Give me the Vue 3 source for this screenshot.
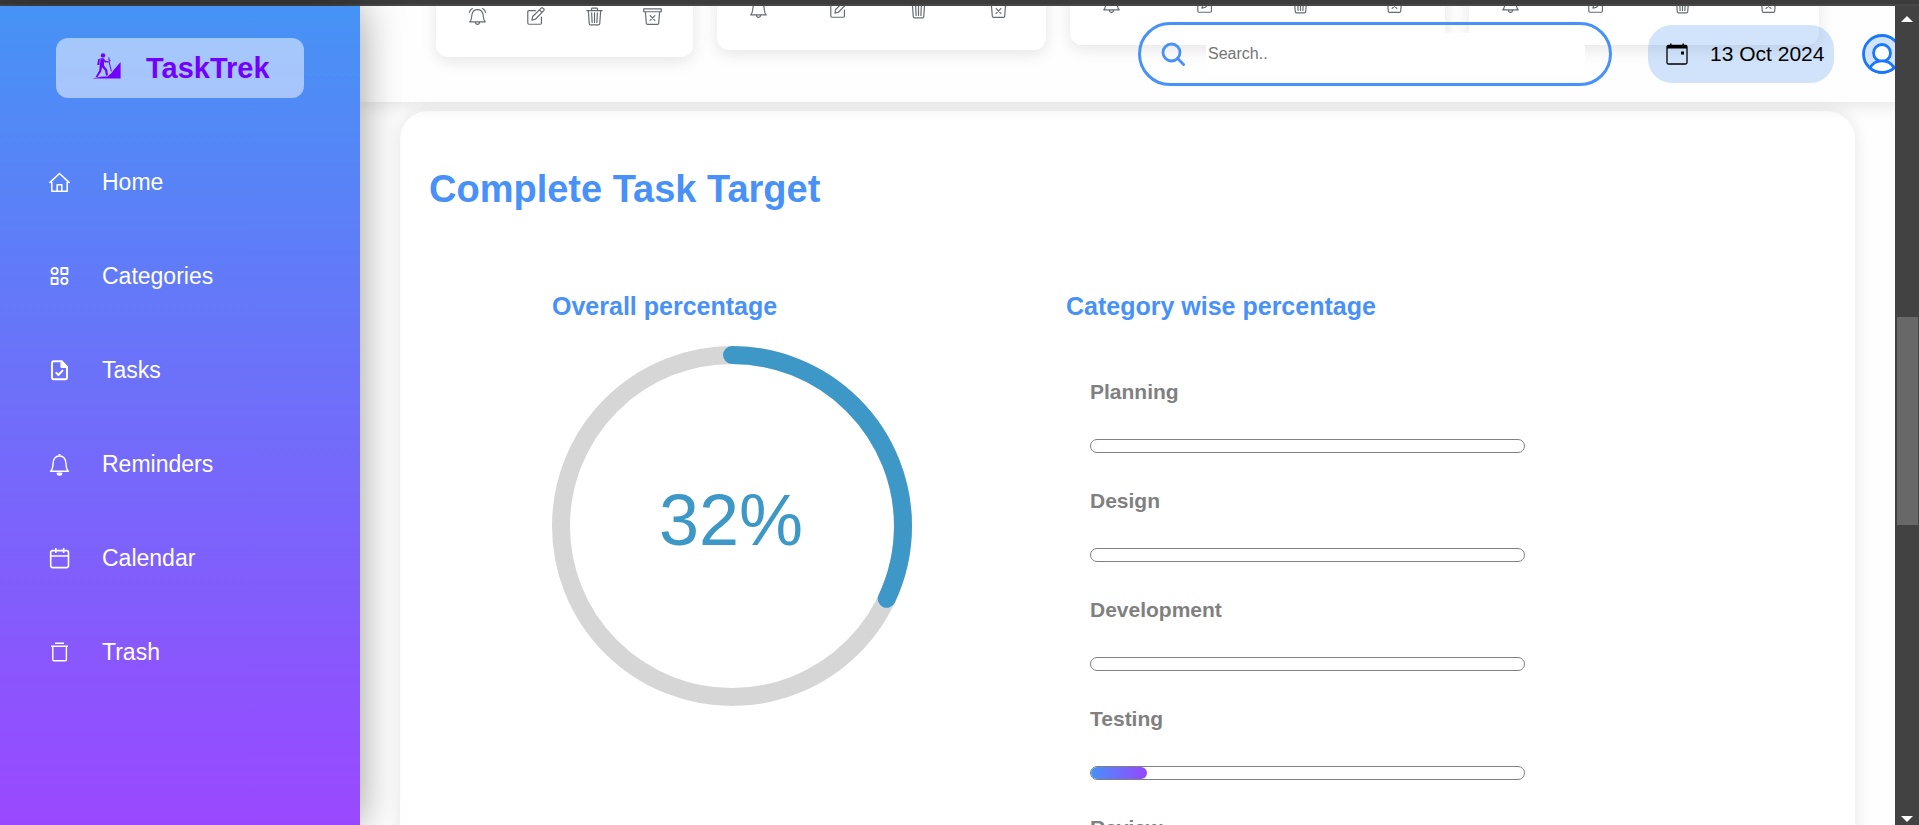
<script setup>
const navItems = [
  { label: 'Home', icon: 'home' },
  { label: 'Categories', icon: 'grid' },
  { label: 'Tasks', icon: 'file' },
  { label: 'Reminders', icon: 'bell' },
  { label: 'Calendar', icon: 'calendar' },
  { label: 'Trash', icon: 'trash' }
]

const taskCards = [
  { id: 1, size: 'tall' },
  { id: 2, size: 'medium' },
  { id: 3, size: 'short' },
  { id: 4, size: 'short' }
]

const categories = [
  { name: 'Planning', value: 0 },
  { name: 'Design', value: 0 },
  { name: 'Development', value: 0 },
  { name: 'Testing', value: 13 },
  { name: 'Review', value: 0 }
]

const overall = 32
</script>

<template>
  <div class="app">
    <div class="window-edge"></div>
    <div class="shell">
      <aside class="sidebar">
        <a class="brand" href="#">
          <svg class="brand-icon" viewBox="0 0 28 26" aria-hidden="true">
            <circle cx="10" cy="2.4" r="2.2" />
            <path d="M5.2 6.2 7 5.8 6.4 12H4.2z" />
            <path d="M7.6 5.2h3l2 2.6 3 .4.2 1.4-3.8-.2-1-1v4.2l3.200 4.200.8 5.400-2 .6-1-5.200-3-3.400-.8 4.200L4.600 24H2.600l3.600-6.600z" />
            <path d="M0 25.200 4 24.400l5.600-.8 5-.2 4.400-3.800 1.600-2.600L27.600 9v16.400H0z" />
            <path class="pole" d="m15.800 4.400.6 5.600 2 8.400M16 6.800l1.600.8" />
          </svg>
          <span>TaskTrek</span>
        </a>
        <nav class="nav">
          <a v-for="item in navItems" :key="item.label" class="nav-link" href="#">
            <svg class="nav-icon" viewBox="0 0 22 22" aria-hidden="true">
              <g v-if="item.icon === 'home'">
                <path d="M1.5 11.8 11.5 2.500l10 9.300" />
                <path d="M3.800 11v9.200h15.400V11" />
                <path d="M9.200 20v-6.200h4.600V20" />
              </g>
              <g v-else-if="item.icon === 'grid'" class="bold">
                <circle cx="6.6" cy="6" r="3.1" />
                <rect x="13.4" y="3" width="6" height="6" />
                <rect x="3.6" y="13" width="6" height="6" />
                <circle cx="16.4" cy="16" r="3.1" />
              </g>
              <g v-else-if="item.icon === 'file'" class="bold">
                <path d="M13.4 2.2H5.6a1.6 1.6 0 0 0-1.6 1.6v14.8a1.6 1.6 0 0 0 1.6 1.6h11.8a1.6 1.6 0 0 0 1.6-1.6V8z" />
                <path class="solid" d="M13.4 2.2V8H19z" />
                <path d="m7.8 13.4 2.6 2.6 4.6-4.8" />
              </g>
              <g v-else-if="item.icon === 'bell'" class="thin">
                <path d="M2.600 18.200h17.800c-2.200-1.800-2.200-4.600-2.400-7.200-.2-4.800-2.600-8-6.500-8s-6.300 3.200-6.500 8c-.2 2.600-.2 5.400-2.400 7.200z" />
                <path d="M10.400 1.800h2.200" />
                <path class="solid" d="M9.300 20.200h4.400c0 1.200-1 1.800-2.200 1.800s-2.200-.6-2.200-1.800z" />
              </g>
              <g v-else-if="item.icon === 'calendar'">
                <rect x="2.700" y="3.600" width="17.800" height="17" rx="2" />
                <path d="M2.700 9h17.800M7.800 1v5M15.600 1v5" />
              </g>
              <g v-else class="thin">
                <path d="M3 5.300h17M7 2.300h9" />
                <path d="M4.800 5.300v13.500a1 1 0 0 0 1 1h11.600a1 1 0 0 0 1-1V5.300" />
              </g>
            </svg>
            <span>{{ item.label }}</span>
          </a>
        </nav>
      </aside>

      <main class="main">
        <section class="strip" aria-label="Tasks">
          <article v-for="card in taskCards" :key="card.id" class="task-card" :class="card.size">
            <button class="tool" type="button" aria-label="Remind">
              <svg viewBox="0 0 16 16">
                <path d="M1.500 12.500h13c-1.700-1.300-1.400-3.500-1.800-6C12.300 3.700 10.500 2.200 8 2.200S3.700 3.700 3.300 6.500c-.4 2.500-.1 4.700-1.800 6zM6.300 12.900c.1 1.200.8 1.800 1.700 1.800s1.600-.6 1.700-1.800M1.200 4.500C1.500 3 2.300 2 3.700 1.300M14.800 4.500c-.3-1.500-1.100-2.500-2.500-3.200" />
              </svg>
            </button>
            <button class="tool" type="button" aria-label="Edit">
              <svg viewBox="0 0 16 16">
                <path d="M8 3H2.500A1 1 0 0 0 1.500 4v9.500a1 1 0 0 0 1 1H12a1 1 0 0 0 1-1V8.500M5 11l.6-3L12.800.9a1 1 0 0 1 1.400 0l.8.8a1 1 0 0 1 0 1.400L7.900 10.300zM11.300 2.400l2.200 2.200" />
              </svg>
            </button>
            <button class="tool" type="button" aria-label="Delete">
              <svg viewBox="0 0 16 16">
                <path d="M1.500 3h13M5.500 3V1.500a.6.6 0 0 1 .6-.6h3.800a.6.6 0 0 1 .6.6V3M2.800 3l.8 11.100a1 1 0 0 0 1 .9h6.800a1 1 0 0 0 1-.9L13.200 3M5.600 5l.4 8M8 5v8M10.400 5l-.4 8" />
              </svg>
            </button>
            <button class="tool" type="button" aria-label="Archive">
              <svg viewBox="0 0 16 16">
                <path d="M.6 1.500h14.800V4H.6zM2 4l.8 9.700a1 1 0 0 0 1 .9h8.400a1 1 0 0 0 1-.9L14 4M6 7.300l4 4M10 7.300l-4 4" />
              </svg>
            </button>
          </article>
        </section>

        <header class="topbar">
          <label class="search">
            <svg class="search-icon" viewBox="0 0 24 24" aria-hidden="true">
              <circle cx="10.500" cy="10.500" r="8.500" />
              <path d="m16.600 16.600 6 6" />
            </svg>
            <input type="text" placeholder="Search.." aria-label="Search" />
          </label>
          <div class="date">
            <svg class="date-icon" viewBox="0 0 22 22" aria-hidden="true">
              <rect class="frame" x="1" y="2.500" width="20" height="18.500" rx="1.500" />
              <path d="M1 5.500V3.500A1.500 1.500 0 0 1 2.500 2H4V.5h1.500V2h11V.5H18V2h1.500A1.500 1.500 0 0 1 21 3.500v2z" />
              <rect x="15" y="8.500" width="3" height="3" />
            </svg>
            <time datetime="2024-10-13">13 Oct 2024</time>
          </div>
          <button class="avatar" type="button" aria-label="Account">
            <svg viewBox="0 0 40 40">
              <circle class="disc" cx="20" cy="20" r="18.500" />
              <circle class="inner" cx="20" cy="19" r="8.500" />
              <path class="inner" d="M8 34c2.500-5 7-7.200 12-7.200S29.500 29 32 34a18.500 18.500 0 0 1-24 0z" />
            </svg>
          </button>
        </header>

        <section class="content">
          <div class="target">
            <h1>Complete Task Target</h1>
            <div class="columns">
              <div class="overall">
                <h2>Overall percentage</h2>
                <svg class="ring" viewBox="0 0 360 360" role="img" aria-label="Overall percentage">
                  <circle class="ring-track" cx="180" cy="180" r="171" />
                  <circle
                    class="ring-value"
                    cx="180"
                    cy="180"
                    r="171"
                    pathLength="100"
                    :stroke-dasharray="`${overall} 100`"
                    transform="rotate(-90 180 180)"
                  />
                  <text x="179" y="199" text-anchor="middle">{{ overall }}%</text>
                </svg>
              </div>
              <div class="by-category">
                <h2>Category wise percentage</h2>
                <ul>
                  <li v-for="category in categories" :key="category.name">
                    <h3>{{ category.name }}</h3>
                    <div class="bar">
                      <div v-if="category.value" class="fill" :style="{ width: category.value + '%' }"></div>
                    </div>
                  </li>
                </ul>
              </div>
            </div>
          </div>
        </section>
      </main>

      <div class="scrollbar">
        <button type="button" aria-label="Scroll up">
          <svg viewBox="0 0 12 6"><path d="M6 0 12 6H0z" /></svg>
        </button>
        <div class="before"></div>
        <div class="thumb"></div>
        <div class="after"></div>
        <button class="down" type="button" aria-label="Scroll down">
          <svg viewBox="0 0 12 6"><path d="M0 0h12L6 6z" /></svg>
        </button>
      </div>
    </div>
  </div>
</template>

<style>
body {
  margin: 0;
  overflow: hidden;
}
</style>

<style scoped>
* {
  box-sizing: border-box;
}

.app {
  display: flex;
  flex-direction: column;
  height: 100vh;
  overflow: hidden;
  background: #fefefe;
  font-family: "Liberation Sans", Arial, sans-serif;
}

.window-edge {
  flex: none;
  height: 6px;
  background: #3c3c3c;
  border-bottom: 2px solid #474747;
}

.shell {
  display: flex;
  flex: 1;
  min-height: 0;
}

button {
  padding: 0;
  border: 0;
  background: none;
}

/* Sidebar */
.sidebar {
  position: relative;
  z-index: 3;
  flex: none;
  width: 360px;
  padding-top: 32px;
  background: linear-gradient(#4693f5, #9a48ff);
  box-shadow: 0 0 40px rgba(0, 0, 0, 0.4);
}

.brand {
  display: flex;
  align-items: center;
  gap: 25px;
  height: 60px;
  margin: 0 56px 37px;
  padding-left: 37px;
  border-radius: 12px;
  background: rgba(255, 255, 255, 0.5);
  color: #7300ff;
  font-size: 29px;
  font-weight: bold;
  text-decoration: none;
}

.brand-icon {
  width: 28px;
  height: 26px;
  margin-bottom: 4px;
  fill: currentColor;
}

.pole {
  fill: none;
  stroke: currentColor;
}

.nav {
  display: flex;
  flex-direction: column;
}

.nav-link {
  display: flex;
  align-items: center;
  gap: 32px;
  height: 94px;
  padding-left: 48px;
  color: #fff;
  font-size: 23px;
  text-decoration: none;
}

.nav-icon {
  width: 22px;
  height: 22px;
  overflow: visible;
  fill: none;
  stroke: #fff;
  stroke-width: 1.6;
  stroke-linejoin: round;
}

.bold {
  stroke-width: 1.9;
}

.thin {
  stroke-width: 1.4;
}

.solid {
  fill: #fff;
}

/* Main area */
.main {
  position: relative;
  display: flex;
  flex: 1;
  flex-direction: column;
  min-width: 0;
  overflow: hidden;
}

.strip {
  display: grid;
  flex: none;
  grid-template-columns: 257fr 329fr 375fr 350fr;
  align-items: start;
  gap: 24px;
  height: 96px;
  padding: 0 76px;
  overflow: hidden;
  background: #fefefe;
}

.task-card {
  display: flex;
  align-items: flex-end;
  justify-content: space-between;
  height: 59px;
  margin-top: -20px;
  padding: 0 41px 31px 32px;
  border-radius: 12px;
  background: #fff;
  box-shadow: 0 4px 16px rgba(0, 0, 0, 0.1);
}

.tall {
  height: 71px;
  padding-right: 31px;
}

.medium {
  height: 64px;
  padding-right: 38px;
}

.tool {
  width: 19px;
  height: 19px;
}

.tool svg {
  display: block;
  width: 19px;
  height: 19px;
  fill: none;
  stroke: #656b70;
  stroke-linecap: round;
  stroke-linejoin: round;
}

.topbar {
  position: absolute;
  z-index: 2;
  top: 0;
  right: -7px;
  left: 0;
  display: flex;
  align-items: center;
  justify-content: flex-end;
  height: 96px;
  box-shadow: 0 4px 16px rgba(0, 0, 0, 0.1);
}

.search {
  display: flex;
  align-items: center;
  width: 474px;
  height: 64px;
  margin-right: 36px;
  padding: 0 24px 0 20px;
  border: 3px solid #4791f8;
  border-radius: 32px;
}

.search-icon {
  flex: none;
  width: 24px;
  height: 24px;
  margin-right: 21px;
  fill: none;
  stroke: #4791f8;
  stroke-width: 2.8;
  stroke-linecap: round;
}

.search input {
  flex: 1;
  min-width: 0;
  height: 42px;
  padding: 0 2px;
  border: 0;
  background: #fff;
  font-family: inherit;
  font-size: 16px;
}

.search input::placeholder {
  color: #757575;
}

.date {
  display: flex;
  align-items: center;
  gap: 22px;
  width: 186px;
  height: 58px;
  margin-right: 28px;
  padding-left: 18px;
  border-radius: 24px;
  background: rgba(24, 119, 242, 0.2);
  color: #000;
  font-size: 21px;
  white-space: nowrap;
}

.date-icon {
  flex: none;
  width: 22px;
  height: 22px;
}

.frame {
  fill: none;
  stroke: #000;
  stroke-width: 1.3;
}

.avatar {
  width: 40px;
  height: 40px;
}

.avatar svg {
  display: block;
}

.disc,
.inner {
  fill: #d1e4fc;
  stroke: #1877ff;
  stroke-width: 2.8;
}

.inner {
  fill: #fff;
}

/* Target card */
.content {
  display: flex;
  flex: 1;
  min-height: 0;
  padding: 9px 40px 0;
}

.target {
  flex: 1;
  height: 900px;
  padding-top: 57px;
  border-radius: 28px;
  background: #fff;
  box-shadow: 0 0 16px rgba(0, 0, 0, 0.1);
}

h1,
h2,
h3 {
  margin: 0;
  font-weight: bold;
}

h1 {
  margin: 0 29px 81px;
  color: #4791f8;
  font-size: 38px;
  line-height: 42px;
}

.columns {
  display: grid;
  grid-template-columns: 514fr 459fr;
  padding: 0 330px 0 152px;
}

h2 {
  color: #4791f8;
  font-size: 25px;
  line-height: 30px;
  white-space: nowrap;
}

.overall h2 {
  margin-bottom: 25px;
}

.ring {
  display: block;
  width: 360px;
  height: 360px;
}

.ring-track,
.ring-value {
  fill: none;
  stroke: #d6d6d6;
  stroke-width: 18;
}

.ring-value {
  stroke: #3d98c7;
  stroke-linecap: round;
}

.ring text {
  fill: #3d98c7;
  font-size: 72px;
}

ul {
  margin: 59px 0 0;
  padding: 0 0 0 24px;
  list-style: none;
}

li {
  padding-bottom: 36px;
}

h3 {
  margin-bottom: 35px;
  color: #808080;
  font-size: 21px;
  line-height: 24px;
}

.bar {
  height: 14px;
  border: 1px solid #808080;
  border-radius: 7px;
}

.fill {
  height: 100%;
  border-radius: 6px;
  background: linear-gradient(90deg, #4791f8, #9747ff);
}

/* Scrollbar */
.scrollbar {
  position: relative;
  z-index: 4;
  display: flex;
  flex: none;
  flex-direction: column;
  width: 24px;
  background: #424242;
}

.scrollbar button {
  display: flex;
  align-items: center;
  justify-content: center;
  height: 26px;
}

.scrollbar .down {
  height: 12px;
}

.scrollbar svg {
  width: 12px;
  height: 6px;
  fill: #fff;
}

.before {
  flex: 285;
}

.thumb {
  flex: 208;
  margin: 0 1px 0 2px;
  background: #686868;
}

.after {
  flex: 288;
}
</style>
